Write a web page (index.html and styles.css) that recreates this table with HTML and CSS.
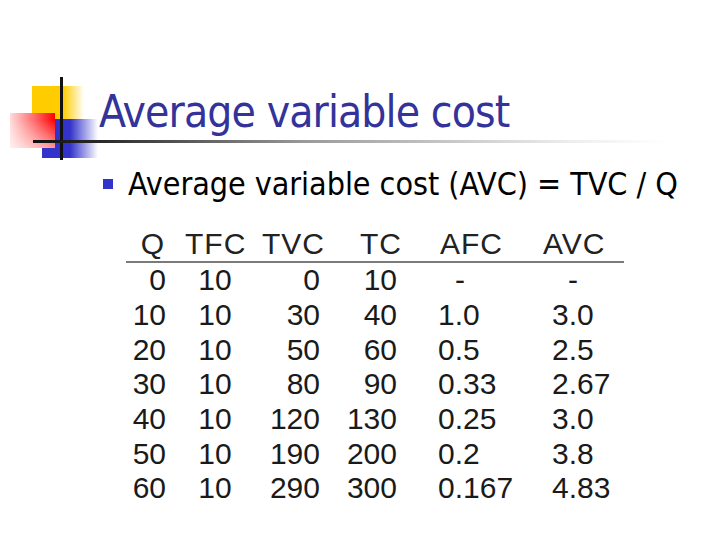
FILE: index.html
```html
<!DOCTYPE html>
<html lang="en">
<head>
    <meta charset="UTF-8">
    <meta name="viewport" content="width=device-width, initial-scale=1.0">
    <title>Average variable cost</title>
    <link rel="stylesheet" href="styles.css">
</head>
<body>
    <div class="slide">
        <div class="logo">
            <span class="logo-yellow"></span>
            <span class="logo-blue"></span>
            <span class="logo-red"></span>
            <span class="logo-line"></span>
        </div>

        <h1 class="title">Average variable cost</h1>
        <div class="rule"></div>

        <ul class="points">
            <li><span class="mark"></span>Average variable cost (AVC) = TVC / Q</li>
        </ul>

        <table class="costs">
            <colgroup>
                <col class="c-q"><col class="c-tfc"><col class="c-tvc">
                <col class="c-tc"><col class="c-afc"><col class="c-avc">
            </colgroup>
            <thead>
                <tr><th>Q</th><th>TFC</th><th>TVC</th><th>TC</th><th>AFC</th><th>AVC</th></tr>
            </thead>
            <tbody>
                <tr><td>0</td><td>10</td><td>0</td><td>10</td><td class="dash-afc">-</td><td class="dash-avc">-</td></tr>
                <tr><td>10</td><td>10</td><td>30</td><td>40</td><td>1.0</td><td>3.0</td></tr>
                <tr><td>20</td><td>10</td><td>50</td><td>60</td><td>0.5</td><td>2.5</td></tr>
                <tr><td>30</td><td>10</td><td>80</td><td>90</td><td>0.33</td><td>2.67</td></tr>
                <tr><td>40</td><td>10</td><td>120</td><td>130</td><td>0.25</td><td>3.0</td></tr>
                <tr><td>50</td><td>10</td><td>190</td><td>200</td><td>0.2</td><td>3.8</td></tr>
                <tr><td>60</td><td>10</td><td>290</td><td>300</td><td>0.167</td><td>4.83</td></tr>
            </tbody>
        </table>
    </div>
</body>
</html>
```

FILE: styles.css
```css
body {
    margin: 0;
    background-color: #ffffff;
}
.slide {
    position: relative;
    width: 720px;
    height: 540px;
    overflow: hidden;
}

/* logo de bloques */
.logo span {
    position: absolute;
    display: block;
}
.logo-yellow {
    left: 32px;
    top: 86px;
    width: 52px;
    height: 34px;
    background: linear-gradient(to right, #ffcc00 0%, #ffcc00 60%, rgba(255, 214, 60, 0) 100%);
}
.logo-blue {
    left: 42px;
    top: 119px;
    width: 56px;
    height: 39px;
    background: linear-gradient(to right, #3333cc 0%, #3333cc 50%, rgba(60, 60, 210, 0) 100%);
}
.logo-red {
    left: 10px;
    top: 113px;
    width: 45px;
    height: 35px;
    background:
        linear-gradient(to bottom, rgba(255, 255, 255, 0) 20%, rgba(255, 255, 255, 0.6) 100%),
        linear-gradient(to left, #ff0000 0%, #ff6a6a 45%, #ffdcdc 100%);
}
.logo-line {
    left: 60px;
    top: 77px;
    width: 3px;
    height: 83px;
    background-color: #111111;
}

.title {
    margin: 0;
    padding: 86px 0 0 99px;
    font-family: "DejaVu Sans Condensed", "DejaVu Sans", sans-serif;
    font-size: 44px;
    font-weight: normal;
    line-height: 52px;
    letter-spacing: -0.9px;
    color: #333399;
}
.rule {
    position: relative;
    z-index: 1;
    margin: 2px 0 0 33px;
    width: 634px;
    height: 3px;
    background: linear-gradient(to right, #111111 0%, #2a2a2a 11%, #777777 33%, #9a9a9a 43%, #c8c8c8 66%, #eeeeee 85%, #ffffff 100%);
}

.points {
    list-style: none;
    margin: 21px 0 0 0;
    padding: 0 0 0 103px;
}
.points li {
    display: flex;
    align-items: center;
    gap: 15px;
    font-family: "DejaVu Sans Condensed", "DejaVu Sans", sans-serif;
    font-size: 32px;
    line-height: 40px;
    letter-spacing: -0.05px;
    color: #000000;
}
.mark {
    width: 10px;
    height: 10px;
    background-color: #3333cc;
}

.costs {
    margin: 23px 0 0 126px;
    width: 498px;
    border-collapse: collapse;
    table-layout: fixed;
    font-family: "Liberation Sans", Arial, sans-serif;
    font-size: 30px;
    line-height: 34px;
    color: #1a1a1a;
}
.c-q { width: 42px; }
.c-tfc { width: 94px; }
.c-tvc { width: 68px; }
.c-tc { width: 80px; }
.c-afc { width: 120px; }
.c-avc { width: 94px; }

.costs th,
.costs td {
    padding: 0;
    font-weight: normal;
    white-space: nowrap;
}
.costs th {
    height: 34px;
    color: #222222;
    letter-spacing: 1px;
    border-bottom: 2px solid #7a7a7a;
}
.costs td {
    height: 34.7px;
}
.costs th:nth-child(1) { text-align: right; padding-right: 3px; }
.costs th:nth-child(2) { text-align: left; padding-left: 17px; }
.costs th:nth-child(3) { text-align: left; padding-left: 0; }
.costs th:nth-child(4) { text-align: left; padding-left: 30px; }
.costs th:nth-child(5) { text-align: left; padding-left: 30px; }
.costs th:nth-child(6) { text-align: left; padding-left: 13px; }

.costs td:nth-child(1) { text-align: right; padding-right: 2px; }
.costs td:nth-child(2) { text-align: center; }
.costs td:nth-child(3) { text-align: right; padding-right: 10px; }
.costs td:nth-child(4) { text-align: right; padding-right: 13px; }
.costs td:nth-child(5) { text-align: left; padding-left: 28px; }
.costs td:nth-child(6) { text-align: left; padding-left: 22px; }
.costs td.dash-afc { padding-left: 45px; }
.costs td.dash-avc { padding-left: 38px; }
```
